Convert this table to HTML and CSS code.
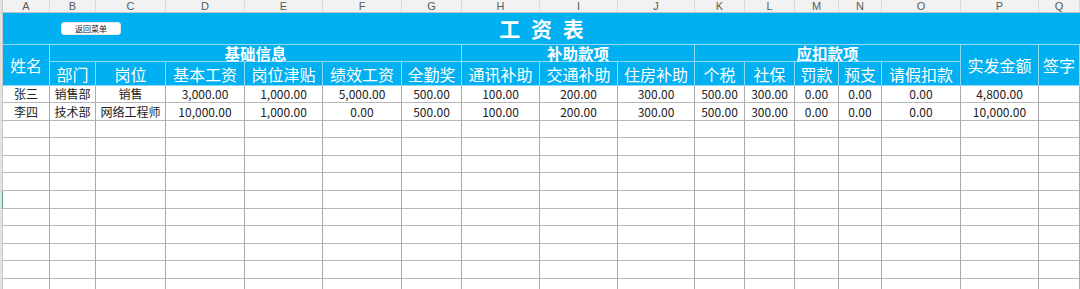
FILE: index.html
```html
<!DOCTYPE html>
<html lang="zh-CN">
<head>
<meta charset="utf-8">
<title>工资表</title>
<link rel="stylesheet" href="styles.css">
</head>
<body>
<div class="sheet">
  <div class="rh"></div>
  <div class="ch">A</div><div class="ch">B</div><div class="ch">C</div><div class="ch">D</div><div class="ch">E</div><div class="ch">F</div><div class="ch">G</div><div class="ch">H</div><div class="ch">I</div><div class="ch">J</div><div class="ch">K</div><div class="ch">L</div><div class="ch">M</div><div class="ch">N</div><div class="ch">O</div><div class="ch">P</div><div class="ch">Q</div>

  <div class="rh"></div>
  <div class="title"><button class="menu-btn">返回菜单</button><span class="title-text">工 资 表</span></div>

  <div class="rh"></div>
  <div class="hd rs2">姓名</div>
  <div class="hd grp cs6">基础信息</div>
  <div class="hd grp cs3">补助款项</div>
  <div class="hd grp cs5">应扣款项</div>
  <div class="hd rs2">实发金额</div>
  <div class="hd rs2">签字</div>

  <div class="rh"></div>
  <div class="hd">部门</div><div class="hd">岗位</div><div class="hd">基本工资</div><div class="hd">岗位津贴</div><div class="hd">绩效工资</div><div class="hd">全勤奖</div><div class="hd">通讯补助</div><div class="hd">交通补助</div><div class="hd">住房补助</div><div class="hd">个税</div><div class="hd">社保</div><div class="hd">罚款</div><div class="hd">预支</div><div class="hd">请假扣款</div>

  <div class="rh"></div>
  <div class="c">张三</div><div class="c">销售部</div><div class="c">销售</div><div class="c">3,000.00</div><div class="c">1,000.00</div><div class="c">5,000.00</div><div class="c">500.00</div><div class="c">100.00</div><div class="c">200.00</div><div class="c">300.00</div><div class="c">500.00</div><div class="c">300.00</div><div class="c">0.00</div><div class="c">0.00</div><div class="c">0.00</div><div class="c">4,800.00</div><div class="c"></div>

  <div class="rh"></div>
  <div class="c">李四</div><div class="c">技术部</div><div class="c">网络工程师</div><div class="c">10,000.00</div><div class="c">1,000.00</div><div class="c">0.00</div><div class="c">500.00</div><div class="c">100.00</div><div class="c">200.00</div><div class="c">300.00</div><div class="c">500.00</div><div class="c">300.00</div><div class="c">0.00</div><div class="c">0.00</div><div class="c">0.00</div><div class="c">10,000.00</div><div class="c"></div>

  <div class="rh"></div>
  <div class="c"></div><div class="c"></div><div class="c"></div><div class="c"></div><div class="c"></div><div class="c"></div><div class="c"></div><div class="c"></div><div class="c"></div><div class="c"></div><div class="c"></div><div class="c"></div><div class="c"></div><div class="c"></div><div class="c"></div><div class="c"></div><div class="c"></div>
  <div class="rh"></div>
  <div class="c"></div><div class="c"></div><div class="c"></div><div class="c"></div><div class="c"></div><div class="c"></div><div class="c"></div><div class="c"></div><div class="c"></div><div class="c"></div><div class="c"></div><div class="c"></div><div class="c"></div><div class="c"></div><div class="c"></div><div class="c"></div><div class="c"></div>
  <div class="rh"></div>
  <div class="c"></div><div class="c"></div><div class="c"></div><div class="c"></div><div class="c"></div><div class="c"></div><div class="c"></div><div class="c"></div><div class="c"></div><div class="c"></div><div class="c"></div><div class="c"></div><div class="c"></div><div class="c"></div><div class="c"></div><div class="c"></div><div class="c"></div>
  <div class="rh"></div>
  <div class="c"></div><div class="c"></div><div class="c"></div><div class="c"></div><div class="c"></div><div class="c"></div><div class="c"></div><div class="c"></div><div class="c"></div><div class="c"></div><div class="c"></div><div class="c"></div><div class="c"></div><div class="c"></div><div class="c"></div><div class="c"></div><div class="c"></div>
  <div class="rh sel"></div>
  <div class="c"></div><div class="c"></div><div class="c"></div><div class="c"></div><div class="c"></div><div class="c"></div><div class="c"></div><div class="c"></div><div class="c"></div><div class="c"></div><div class="c"></div><div class="c"></div><div class="c"></div><div class="c"></div><div class="c"></div><div class="c"></div><div class="c"></div>
  <div class="rh"></div>
  <div class="c"></div><div class="c"></div><div class="c"></div><div class="c"></div><div class="c"></div><div class="c"></div><div class="c"></div><div class="c"></div><div class="c"></div><div class="c"></div><div class="c"></div><div class="c"></div><div class="c"></div><div class="c"></div><div class="c"></div><div class="c"></div><div class="c"></div>
  <div class="rh"></div>
  <div class="c"></div><div class="c"></div><div class="c"></div><div class="c"></div><div class="c"></div><div class="c"></div><div class="c"></div><div class="c"></div><div class="c"></div><div class="c"></div><div class="c"></div><div class="c"></div><div class="c"></div><div class="c"></div><div class="c"></div><div class="c"></div><div class="c"></div>
  <div class="rh"></div>
  <div class="c"></div><div class="c"></div><div class="c"></div><div class="c"></div><div class="c"></div><div class="c"></div><div class="c"></div><div class="c"></div><div class="c"></div><div class="c"></div><div class="c"></div><div class="c"></div><div class="c"></div><div class="c"></div><div class="c"></div><div class="c"></div><div class="c"></div>
  <div class="rh"></div>
  <div class="c"></div><div class="c"></div><div class="c"></div><div class="c"></div><div class="c"></div><div class="c"></div><div class="c"></div><div class="c"></div><div class="c"></div><div class="c"></div><div class="c"></div><div class="c"></div><div class="c"></div><div class="c"></div><div class="c"></div><div class="c"></div><div class="c"></div>
  <div class="rh"></div>
  <div class="c"></div><div class="c"></div><div class="c"></div><div class="c"></div><div class="c"></div><div class="c"></div><div class="c"></div><div class="c"></div><div class="c"></div><div class="c"></div><div class="c"></div><div class="c"></div><div class="c"></div><div class="c"></div><div class="c"></div><div class="c"></div><div class="c"></div>
</div>
</body>
</html>
```

FILE: styles.css
```css
* { box-sizing: border-box; margin: 0; padding: 0; }
html, body { background: #fff; }
body {
  margin: 0;
  overflow: hidden;
  font-family: "Noto Sans CJK SC", "Microsoft YaHei", sans-serif;
}

.sheet {
  display: grid;
  width: 1080px;
  grid-template-columns: 3px 47px 46px 70px 79px 78px 79px 60px 78px 78px 77px 50px 50px 44px 43px 79px 78px 1fr;
  grid-template-rows: 13px 32px 17px 24px 17px 18px 17px 18px 17px 18px 18px 17px 18px 17px 18px 18px;
}

.sheet > div {
  display: flex;
  align-items: center;
  justify-content: center;
  white-space: nowrap;
  overflow: hidden;
  line-height: 1;
}

.rh {
  background: #e3e3e3;
  border-right: 1px solid #c9c9c9;
  border-bottom: 1px solid #d2d2d2;
}
.rh.sel { border-right: 1px solid #5c9f7c; }

.ch {
  background: #f2f2f2;
  color: #5a5a5a;
  font-family: "Liberation Sans", Arial, sans-serif;
  font-size: 11px;
  border-right: 1px solid #dadada;
  border-bottom: 1px solid #c4c4c4;
}

.title {
  grid-column: 2 / -1;
  position: relative;
  background: #00b0f0;
  color: #fff;
  font-size: 21px;
  font-weight: 700;
  border-bottom: 1px solid #8cdbf8;
}
.title-text {
  white-space: pre;
  letter-spacing: 3px;
  padding-left: 3px;
}
.menu-btn {
  position: absolute;
  left: 58px;
  top: 9px;
  width: 60px;
  height: 13px;
  background: #fff;
  border: 1px solid #e6e6e6;
  border-radius: 3px;
  font-family: "Noto Sans CJK SC", sans-serif;
  font-size: 8px;
  line-height: 11px;
  color: #222;
  text-align: center;
}

.hd {
  background: #00b0f0;
  color: #fff;
  font-size: 16px;
  border-right: 1px solid #8cdbf8;
  border-bottom: 1px solid #8cdbf8;
}
.sheet > .grp {
  font-weight: 700;
  font-size: 15.5px;
  line-height: 16px;
  overflow: visible;
  padding-bottom: 1px;
}
.rs2 { grid-row: span 2; }
.cs3 { grid-column: span 3; }
.cs5 { grid-column: span 5; }
.cs6 { grid-column: span 6; }

.c {
  font-size: 12px;
  color: #222;
  border-right: 1px solid #ababab;
  border-bottom: 1px solid #b8b8b8;
}
```
